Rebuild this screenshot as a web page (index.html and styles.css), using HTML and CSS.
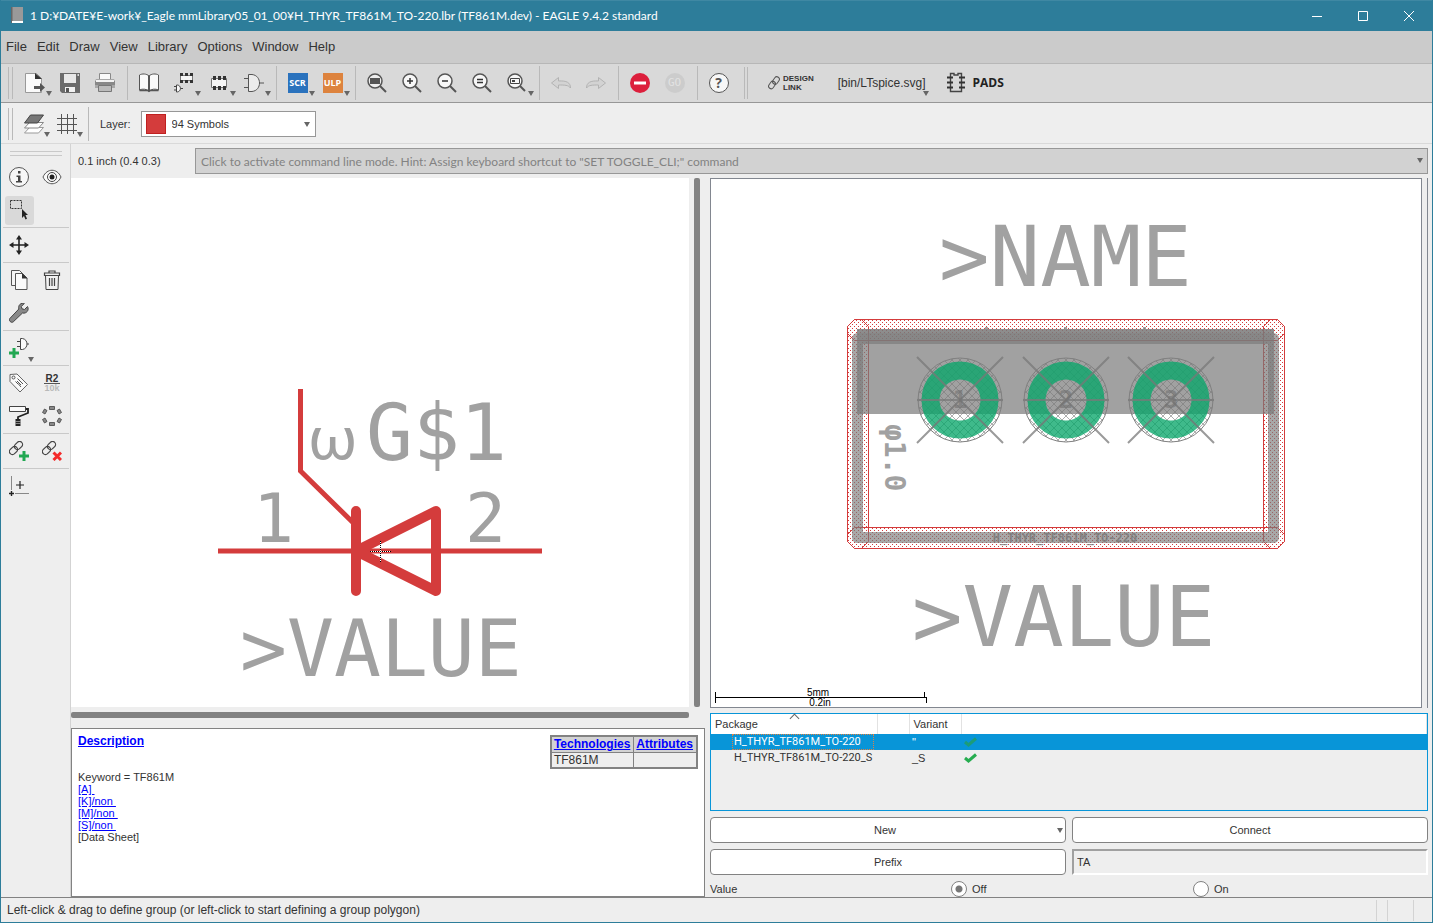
FILE: index.html
```html
<!DOCTYPE html>
<html lang="en">
<head>
<meta charset="utf-8">
<title>EAGLE 9.4.2 standard</title>
<link rel="stylesheet" href="styles.css">
</head>
<body>
<div class="window">
  <header class="titlebar">
    <svg class="app-icon" width="14" height="18" viewBox="0 0 14 18"><rect x="1" y="0" width="12" height="14" fill="#999"/><path d="M1 0h1.500v16H1z" fill="#666"/><path d="M2 14h11v2H2z" fill="#fff"/></svg>
    <h1 class="title">1 D:¥DATE¥E-work¥_Eagle mmLibrary05_01_00¥H_THYR_TF861M_TO-220.lbr (TF861M.dev) - EAGLE 9.4.2 standard</h1>
    <div class="caption-buttons">
      <button class="caption" aria-label="Minimize"><svg width="12" height="12" viewBox="0 0 12 12"><path d="M1 6.500h10" stroke="#fff" fill="none"/></svg></button>
      <button class="caption" aria-label="Maximize"><svg width="12" height="12" viewBox="0 0 12 12"><path d="M1.500 1.500h9v9h-9z" stroke="#fff" fill="none"/></svg></button>
      <button class="caption" aria-label="Close"><svg width="12" height="12" viewBox="0 0 12 12"><path d="M1 1l10 10M11 1L1 11" stroke="#fff" fill="none"/></svg></button>
    </div>
  </header>

  <nav class="menubar">
    <button class="menu">File</button>
    <button class="menu">Edit</button>
    <button class="menu">Draw</button>
    <button class="menu">View</button>
    <button class="menu">Library</button>
    <button class="menu">Options</button>
    <button class="menu">Window</button>
    <button class="menu">Help</button>
  </nav>

  <div class="toolbar">
    <span class="grip"></span>
    <button class="tool drop" aria-label="Open"><svg width="20" height="20" viewBox="0 0 20 20"><path d="M.5.5h11l5 5v14H.5z" fill="#fafafa" stroke="#999"/><path d="M10 0l7 6h-7z" fill="#333"/><path d="M9 13h6v-3l5 4.500-5 4.500v-3H9z" fill="#555"/></svg></button>
    <button class="tool" aria-label="Save"><svg width="20" height="20" viewBox="0 0 20 20"><path d="M0 0h20v20H2l-2-2z" fill="#6b6b6b"/><path d="M4 1h12v9H4z" fill="#e8e8e8"/><path d="M5 14h10v5H5z" fill="#f2f2f2"/><path d="M6 15h3v4H6z" fill="#555"/><path d="M17.500 1h1.500v2h-1.500z" fill="#ddd"/></svg></button>
    <button class="tool" aria-label="Print"><svg width="20" height="20" viewBox="0 0 20 20"><path d="M4.500.5h11v6h-11z" fill="#fafafa" stroke="#888"/><path d="M1 6h18l1 2v7H0V8z" fill="#a8a8a8"/><path d="M0 8h20v4H0z" fill="#888"/><path d="M1 7h18v2H1z" fill="#f3f3f3"/><path d="M3.500 12.500h13v6h-13z" fill="#bbb" stroke="#777"/></svg></button>
    <span class="sep"></span>
    <button class="tool" aria-label="Library"><svg width="20" height="20" viewBox="0 0 20 20"><path d="M10 3C7.500.500 3 .5.5 2v15c3-1.500 7-1 9.500 1 2.500-2 6.500-2.500 9.500-1V2C17 .5 12.500.5 10 3zv15" fill="#fafafa" stroke="#555"/><path d="M10 3v15" stroke="#333" stroke-width="1.400"/><path d="M.5 17.500h8l1.500 1 1.500-1h8" fill="none" stroke="#555" stroke-width="1.400"/></svg></button>
    <button class="tool drop" aria-label="Device"><svg width="20" height="20" viewBox="0 0 20 20"><path d="M6.500 2.500h12v5h-12z" fill="#f5f5f5" stroke="#777"/><path d="M6 0h3v3H6zM11 0h3v3h-3zM16 0h3v3h-3zM6 7h3v3H6zM11 7h3v3h-3zM16 7h3v3h-3z" fill="#333"/><path d="M2.500 12c5-.5 5.500 7 0 7zM0 13.500h2.500M0 17h2.500M6.500 15.500H9" fill="#f7f7f7" stroke="#444"/></svg></button>
    <button class="tool drop" aria-label="Package"><svg width="20" height="20" viewBox="0 0 20 20"><path d="M2.500 5.500h15v9h-15z" fill="#f5f5f5" stroke="#777"/><path d="M4 3h3v4H4zM9 3h3v4H9zM14 3h3v4h-3zM4 13h3v4H4zM9 13h3v4H9zM14 13h3v4h-3z" fill="#333"/></svg></button>
    <button class="tool drop" aria-label="Symbol"><svg width="20" height="20" viewBox="0 0 20 20"><path d="M4.500 1.500H8c10 1 10 16 0 17H4.500zM0 5.500h4.500M0 14.500h4.500M15.500 10H20" fill="#ececec" stroke="#555"/></svg></button>
    <span class="sep"></span>
    <button class="tool drop"><span class="tag scr">SCR</span></button>
    <button class="tool drop"><span class="tag ulp">ULP</span></button>
    <span class="sep"></span>
    <button class="tool" aria-label="Zoom to fit"><svg width="20" height="20" viewBox="0 0 20 20"><circle cx="8" cy="8" r="7" fill="#eee" stroke="#555" stroke-width="1.500"/><path d="M13 13l6 6" stroke="#555" stroke-width="2"/><path d="M3 5h10v6H3z" fill="#555"/></svg></button>
    <button class="tool" aria-label="Zoom in"><svg width="20" height="20" viewBox="0 0 20 20"><circle cx="8" cy="8" r="7" fill="#f7f7f7" stroke="#555" stroke-width="1.500"/><path d="M13 13l6 6" stroke="#555" stroke-width="2"/><path d="M5 8h6M8 5v6" stroke="#333" stroke-width="1.500"/></svg></button>
    <button class="tool" aria-label="Zoom out"><svg width="20" height="20" viewBox="0 0 20 20"><circle cx="8" cy="8" r="7" fill="#f7f7f7" stroke="#555" stroke-width="1.500"/><path d="M13 13l6 6" stroke="#555" stroke-width="2"/><path d="M5 8h6" stroke="#333" stroke-width="1.500"/></svg></button>
    <button class="tool" aria-label="Zoom redraw"><svg width="20" height="20" viewBox="0 0 20 20"><circle cx="8" cy="8" r="7" fill="#f7f7f7" stroke="#555" stroke-width="1.500"/><path d="M13 13l6 6" stroke="#555" stroke-width="2"/><path d="M5 6.500h6M5 9.500h6" stroke="#333" stroke-width="1.300"/></svg></button>
    <button class="tool drop" aria-label="Zoom select"><svg width="20" height="20" viewBox="0 0 20 20"><circle cx="8" cy="8" r="7" fill="#f7f7f7" stroke="#555" stroke-width="1.500"/><path d="M13 13l5 5" stroke="#555" stroke-width="2"/><path d="M3.500 5.500h9v5h-9z" fill="none" stroke="#444"/><path d="M5 7h3v2H5z" fill="#444"/></svg></button>
    <span class="sep"></span>
    <button class="tool" aria-label="Undo"><svg width="20" height="20" viewBox="0 0 20 20"><path d="M.5 10l7-5.500v3.500c8-.5 12 1.500 12 7-2-3-6-3-12-3v3.500z" fill="#d3d3d3" stroke="#b3b3b3"/></svg></button>
    <button class="tool" aria-label="Redo"><svg width="20" height="20" viewBox="0 0 20 20"><path d="M19.500 10l-7-5.500v3.500c-8-.5-12 1.500-12 7 2-3 6-3 12-3v3.500z" fill="#d3d3d3" stroke="#b3b3b3"/></svg></button>
    <span class="sep"></span>
    <button class="tool" aria-label="Stop"><svg width="20" height="20" viewBox="0 0 20 20"><circle cx="10" cy="10" r="10" fill="#dc1f3c"/><path d="M4 8.500h12v3H4z" fill="#fff"/></svg></button>
    <button class="tool"><span class="go">GO</span></button>
    <span class="sep"></span>
    <button class="tool"><span class="help">?</span></button>
    <span class="grip wide"></span>
    <button class="plug design"><svg width="12" height="14" viewBox="0 0 12 14"><g fill="none" stroke="#555"><rect x="-2.500" y="-4" width="5" height="8" rx="2.500" transform="translate(8 4.500) rotate(35)"/><rect x="-2.500" y="-4" width="5" height="8" rx="2.500" transform="translate(4 9) rotate(35)"/></g></svg><span>DESIGN<br>LINK</span></button>
    <button class="plug ltspice drop">[bin/LTspice.svg]</button>
    <button class="plug pads"><svg width="20" height="22" viewBox="0 0 20 22"><path d="M4.500 1.500h3.500v1.500h4V1.500h3.500v18h-11z" fill="#d9d9d9" stroke="#444" stroke-width="1.400"/><path d="M1 5.500h6M1 10.500h6M1 15.500h6M13 5.500h6M13 10.500h6M13 15.500h6" stroke="#333" stroke-width="2"/></svg><span>PADS</span></button>
  </div>

  <div class="toolbar params">
    <span class="grip"></span>
    <button class="tool drop" aria-label="Layer settings"><svg width="20" height="20" viewBox="0 0 20 20"><path d="M.5 19l5-5.500h14l-5 5.500z" fill="#fff" stroke="#999"/><path d="M.5 14l5-5.500h14l-5 5.500z" fill="#fff" stroke="#888"/><path d="M.5 9l6-8h13l-6 8z" fill="#777" stroke="#444"/></svg></button>
    <button class="tool drop" aria-label="Grid"><svg width="20" height="20" viewBox="0 0 20 20"><path d="M0 4.500h20M0 10.500h20M0 16.500h20M4.500 0v20M10.500 0v20M16.500 0v20" stroke="#555"/></svg></button>
    <span class="sep"></span>
    <label class="layer-label" for="layer">Layer:</label>
    <span class="layer-box"><span class="swatch"></span><select id="layer"><option>94 Symbols</option></select></span>
  </div>

  <div class="body">
    <aside class="side">
      <span class="side-grip"></span>
      <div class="group">
        <button class="stool" aria-label="Info"><svg width="20" height="20" viewBox="0 0 20 20"><circle cx="10" cy="10" r="9.500" fill="#f7f7f7" stroke="#555"/><path d="M9 4h2.500v2.500H9zM7.500 8.500h4V14H13v1.500H7V14h2V10H7.500z" fill="#444"/></svg></button>
        <button class="stool" aria-label="Show"><svg width="20" height="20" viewBox="0 0 20 20"><path d="M1 10c4-9 14-9 18 0-4 9-14 9-18 0z" fill="#fafafa" stroke="#555"/><circle cx="10" cy="10" r="4.500" fill="#fff" stroke="#444"/><circle cx="10" cy="10" r="2.500" fill="#222"/></svg></button>
        <button class="stool on" aria-label="Group"><svg width="20" height="20" viewBox="0 0 20 20"><path d="M1.500.5h11v8h-11z" fill="none" stroke="#333" stroke-dasharray="2 1"/><path d="M13 9v9l2-2 1.500 3.500 1.500-.8L16.500 15H19z" fill="#222"/></svg></button>
      </div>
      <div class="group">
        <button class="stool" aria-label="Move"><svg width="20" height="20" viewBox="0 0 20 20"><path d="M10 3v14M3 10h14" stroke="#222" stroke-width="1.600"/><path d="M10 0l3 4.500H7zM10 20l3-4.500H7zM0 10l4.500-3v6zM20 10l-4.500-3v6z" fill="#222"/></svg></button>
      </div>
      <div class="group">
        <button class="stool" aria-label="Copy"><svg width="20" height="20" viewBox="0 0 20 20"><path d="M2.500.5h8l3 3v12h-11z" fill="#f5f5f5" stroke="#555"/><path d="M6.500 3.500h7l4.500 4.500v11.500H6.500z" fill="#fafafa" stroke="#555"/><path d="M13 3l5.500 5.500H13z" fill="#333"/></svg></button>
        <button class="stool" aria-label="Delete"><svg width="20" height="20" viewBox="0 0 20 20"><path d="M3.500 5.500h13l-.5 14H4z" fill="#f2f2f2" stroke="#444"/><path d="M2.500 3h15v2.500h-15zM7 3V1h6v2M7.500 8v8M10 8v8M12.500 8v8" fill="none" stroke="#444" stroke-width="1.200"/></svg></button>
        <button class="stool" aria-label="Change"><svg width="20" height="20" viewBox="0 0 20 20"><path d="M18.500 3.500l-3 3-2.500-.7-.7-2.300 3-3c-3-1.200-6.500 1.500-5.500 5.500L.8 15.500c-1.500 2 1.500 5 3.500 3.300L13.500 10c4 1 7-3 5-6.500z" fill="#888" stroke="#444"/></svg></button>
      </div>
      <div class="group">
        <button class="stool drop" aria-label="Add"><svg width="20" height="20" viewBox="0 0 20 20"><path d="M11.500.5h2c6 1 6 10 0 11h-2zM8 3.500h3.500M8 8.500h3.500M18 6h2" fill="#fafafa" stroke="#444"/><path d="M5 10v10M0 15h10" stroke="#22a852" stroke-width="3"/></svg></button>
      </div>
      <div class="group">
        <button class="stool" aria-label="Name"><svg width="20" height="20" viewBox="0 0 20 20"><path d="M1 1.500l7-.5 10.500 10.500-7.500 7.500L1 8.500z" fill="#fafafa" stroke="#666"/><circle cx="4.500" cy="4.500" r="1.500" fill="none" stroke="#555"/><path d="M8.500 5.500L14 11M6.500 8.500L9 11M8 8l4 4M9 10.500L12 14" stroke="#555"/></svg></button>
        <button class="stool"><span class="r2">R2<span class="tenk">10k</span></span></button>
        <button class="stool" aria-label="Paint"><svg width="20" height="20" viewBox="0 0 20 20"><path d="M.5.500h16v5H.5z" fill="#fafafa" stroke="#444"/><path d="M17 3h2v4l-10 4v3" fill="none" stroke="#222" stroke-width="1.800"/><path d="M6.500 13h5v7h-5z" fill="#222"/><path d="M6.500 15.500h5M6.500 17.500h5" stroke="#ccc" stroke-width=".6"/></svg></button>
        <button class="stool" aria-label="Ring"><svg width="20" height="20" viewBox="0 0 20 20"><g fill="#888" stroke="#444" stroke-width=".8"><path d="M7.500.5h5v3h-5zM7.500 16.500h5v3h-5z"/><path d="M2.500 3l2.500 1.500-2 3.500-2.500-1.500zM17.500 3L15 4.500 17 8l2.500-1.500zM.500 13.500L3 12l2 3.500L2.500 17zM19.500 13.500L17 12l-2 3.500 2.500 1.500z"/></g></svg></button>
      </div>
      <div class="group">
        <button class="stool" aria-label="Connect pins"><svg width="20" height="20" viewBox="0 0 20 20"><g fill="none" stroke="#444" stroke-width="1.200"><rect x="-3" y="-4.500" width="6" height="9" rx="3" transform="translate(9.500 4.500) rotate(45)"/><rect x="-3" y="-4.500" width="6" height="9" rx="3" transform="translate(4.500 9.500) rotate(45)"/></g><path d="M15 10v10M10 15h10" stroke="#22a852" stroke-width="3"/></svg></button>
        <button class="stool" aria-label="Disconnect pins"><svg width="20" height="20" viewBox="0 0 20 20"><g fill="none" stroke="#444" stroke-width="1.200"><rect x="-3" y="-4.500" width="6" height="9" rx="3" transform="translate(9.500 4.500) rotate(45)"/><rect x="-3" y="-4.500" width="6" height="9" rx="3" transform="translate(4.500 9.500) rotate(45)"/></g><path d="M11.500 11.500l7.500 7.500M19 11.500L11.500 19" stroke="#f42a2a" stroke-width="3"/></svg></button>
      </div>
      <div class="group last">
        <button class="stool" aria-label="Origin"><svg width="20" height="20" viewBox="0 0 20 20"><path d="M2.500 0v14M6 17.500h14" stroke="#888"/><path d="M2.500 15v5M0 17.500h5" stroke="#222" stroke-width="1.400"/><path d="M11 5v8M7 9h8" stroke="#222" stroke-width="1.200"/></svg></button>
      </div>
    </aside>

    <main class="main">
      <div class="command-row">
        <span class="coords">0.1 inch (0.4 0.3)</span>
        <span class="command"><input type="text" aria-label="Command line" placeholder="Click to activate command line mode. Hint: Assign keyboard shortcut to &quot;SET TOGGLE_CLI;&quot; command"></span>
      </div>

      <div class="panes">
        <section class="column">
          <div class="symbol-row">
            <svg class="canvas symbol" viewBox="71 178 618 529">
              <g fill="none" stroke="#d43c3c">
                <path d="M300.500 389v82l56 55M218 551h324" stroke-width="5"/>
                <path d="M356 511v80M436 511v80l-80-40z" stroke-width="10" stroke-linecap="round" stroke-linejoin="round"/>
              </g>
              <path d="M370 551.500h21M380.500 541v21" stroke="#fff"/>
              <path d="M370 551.500h21M380.500 541v21" stroke="#000" stroke-dasharray="1 1"/>
              <g class="vec">
                <text class="omega" x="308" y="459">ω</text>
                <text class="v78" x="366" y="460">G$1</text>
                <text class="v68" x="253" y="542">1</text>
                <text class="v68" x="465" y="542">2</text>
                <text class="v78" x="240" y="676">&gt;VALUE</text>
              </g>
            </svg>
            <span class="vbar"></span>
          </div>
          <span class="hbar"></span>
          <div class="description">
            <div class="desc-text">
              <a class="head" href="#description">Description</a>
              <p>Keyword = TF861M<br><a href="#a">[A]&nbsp;</a><br><a href="#k">[K]/non&nbsp;</a><br><a href="#m">[M]/non&nbsp;</a><br><a href="#s">[S]/non&nbsp;</a><br>[Data Sheet]</p>
            </div>
            <table class="tech">
              <tr><th><a href="#tech">Technologies</a></th><th><a href="#attr">Attributes</a></th></tr>
              <tr><td>TF861M</td><td></td></tr>
            </table>
          </div>
        </section>

        <section class="column">
          <div class="package-row">
            <svg class="canvas package" viewBox="711 179 710 528">
              <defs>
                <pattern id="dots" width="4" height="4" patternUnits="userSpaceOnUse"><path d="M0 0h1v1H0zM2 2h1v1H2z" fill="#d43c3c"/></pattern>
                <pattern id="cross" width="8" height="8" patternUnits="userSpaceOnUse"><path d="M0 0l8 8M8 0L0 8" stroke="#797979" stroke-width="1" opacity=".6"/></pattern>
                <g id="pad">
                  <circle r="42" fill="url(#cross)"/>
                  <circle r="29.500" fill="none" stroke="#09a76a" stroke-width="18" opacity=".78"/>
                  <circle r="42" fill="none" stroke="#808080"/>
                  <path d="M-43 -43L43 43M43 -43L-43 43M-43 0h86" stroke="#797979" stroke-width="2" opacity=".75"/>
                </g>
              </defs>
              <g fill="url(#dots)" stroke="#d43c3c">
                <path d="M854.500 319.500h423l7 7v7l-7 7h-423l-7-7v-7z"/>
                <path d="M854.500 527.500h423l7 7v7l-7 7h-423l-7-7v-7z"/>
                <path d="M854.500 319.500h7l7 7v215l-7 7h-7l-7-7v-215z"/>
                <path d="M1270.500 319.500h7l7 7v215l-7 7h-7l-7-7v-215z"/>
              </g>
              <g fill="#797979" opacity=".7"><path d="M857 329h417v85H857zM985 327h3v2h-3zM1064 327h3v2h-3zM1143 327h3v2h-3z"/></g>
              <rect x="857.500" y="338.500" width="416" height="199" fill="none" stroke="#797979" stroke-width="11" stroke-linejoin="round" opacity=".65"/>
              <path d="M857 329h417v4H857z" fill="#797979" opacity=".5"/>
              <use href="#pad" x="960" y="400"/>
              <use href="#pad" x="1066" y="400"/>
              <use href="#pad" x="1171" y="400"/>
              <g class="padno"><text x="960" y="408">1</text><text x="1066" y="408">2</text><text x="1171" y="408">3</text></g>
              <g class="vec">
                <text class="v84" x="939" y="286">&gt;NAME</text>
                <text class="v84" x="912" y="646">&gt;VALUE</text>
                <text class="phi" transform="translate(885 424) rotate(90)">φ1.0</text>
              </g>
              <text class="pkgname" x="1065" y="542">H_THYR_TF861M_TO-220</text>
              <path d="M715.500 692v11M715 697.500h212M924.500 692v6M926.500 697v6" stroke="#000" fill="none"/>
              <g class="scale"><text x="818" y="696">5mm</text><text x="820" y="706">0.2in</text></g>
            </svg>
          </div>

          <div class="packages">
            <table>
              <colgroup><col class="c-name"><col class="c-gap"><col class="c-var"><col></colgroup>
              <thead><tr><th class="sorted">Package</th><th></th><th>Variant</th><th></th></tr></thead>
              <tbody>
                <tr class="selected"><td class="name"><span>H_THYR_TF861M_TO-220</span></td><td></td><td>"</td><td><svg width="13" height="10" viewBox="0 0 13 10"><path d="M1 5l3.500 3L12 1.500" fill="none" stroke="#1c9c78" stroke-width="3"/></svg></td></tr>
                <tr><td class="name"><span>H_THYR_TF861M_TO-220_S</span></td><td></td><td>_S</td><td><svg width="13" height="10" viewBox="0 0 13 10"><path d="M1 5l3.500 3L12 1.500" fill="none" stroke="#26ad50" stroke-width="3"/></svg></td></tr>
              </tbody>
            </table>
          </div>

          <div class="actions">
            <button class="action new">New</button>
            <button class="action">Connect</button>
            <button class="action">Prefix</button>
            <input class="prefix" type="text" value="TA" aria-label="Prefix value" readonly>
          </div>
          <div class="value-row">
            <span>Value</span>
            <label><input type="radio" name="value" checked>Off</label>
            <label><input type="radio" name="value">On</label>
          </div>
        </section>
      </div>
    </main>
  </div>

  <footer class="status"><span class="message">Left-click &amp; drag to define group (or left-click to start defining a group polygon)</span><span class="cell a"></span><span class="cell b"></span><span class="cell c"></span></footer>
</div>
</body>
</html>
```
FILE: styles.css
```css
* { box-sizing: border-box; }
body { margin: 0; font: 11px/16px "Liberation Sans", Arial, sans-serif; color: #333; }
button, input, select { font: inherit; color: inherit; }
button { border: 0; background: none; padding: 0; }
svg { display: block; }
a { color: #00f; }

.window { display: flex; flex-direction: column; height: 100vh; background: #eee; border: 1px solid #2d7d9a; border-top: 0; }

.titlebar { display: flex; align-items: center; flex: none; height: 31px; padding-left: 9px; background: #2d7d9a; border-top: 1px solid #3f88a3; color: #fff; }
.title { flex: 1; margin: 0 0 0 6px; font: 12px/16px Lato, "Open Sans", sans-serif; white-space: nowrap; overflow: hidden; }
.caption-buttons { display: flex; }
.caption { display: grid; place-items: center; width: 46px; height: 30px; }

.menubar { display: flex; flex: none; gap: 10px; height: 33px; padding-left: 5px; background: #cbcbcb; border-bottom: 1px solid #b7b7b7; }
.menu { font-size: 13px; }

.toolbar { display: flex; align-items: center; flex: none; height: 39px; padding-left: 7px; background: #d9d9d9; border-bottom: 1px solid #979797; }
.toolbar.params { height: 41px; padding-top: 1px; background: #eee; border-bottom-color: #d9d9d9; }
.grip { width: 5px; height: 32px; margin-right: 5px; border: solid #b9b9b9; border-width: 0 1px; }
.grip.wide { width: 4px; margin: 0 20px 0 7px; }
.sep { width: 1px; height: 34px; margin: 0 4px; background: #b9b9b9; }
.tool { position: relative; display: grid; place-items: center; width: 35px; height: 34px; padding-right: 2px; }
.params .tool { width: 33px; }
.drop::after { content: ""; position: absolute; right: 1px; bottom: 4px; border: solid transparent; border-width: 5px 3px 0; border-top-color: #666; }
.tag { width: 20px; font: bold 9px/20px "Open Sans", sans-serif; color: #fff; text-align: center; }
.scr { background: #2a72bd; }
.ulp { background: #dd833e; }
.go { width: 20px; border-radius: 50%; background: #ccc; color: #e2e2e2; font: 11px/20px "DejaVu Sans Mono", monospace; }
.help { width: 20px; border: 1px solid #555; border-radius: 50%; background: #f7f7f7; color: #555; font: bold 14px/18px "Open Sans", sans-serif; }
.plug { position: relative; display: flex; align-items: center; height: 34px; }
.design { gap: 3px; font: bold 8px/9px "Liberation Sans", sans-serif; text-align: left; }
.ltspice { margin-left: 24px; padding-right: 3px; font-size: 12px; }
.ltspice::after { right: 0; }
.pads { gap: 7px; margin-left: 17px; font: bold 12px/16px "Open Sans", sans-serif; color: #222; }
.layer-label { margin: 0 10px 0 7px; }
.layer-box { display: flex; align-items: center; position: relative; width: 175px; height: 26px; padding: 0 4px; background: #fff; border: 1px solid #979797; }
.layer-box::after, .command::after, .new::after { content: ""; position: absolute; right: 5px; top: 10px; border: solid transparent; border-width: 5px 3px 0; border-top-color: #666; }
.swatch { width: 20px; height: 20px; background: #d43c3c; border: 1px solid #c02020; }
select { flex: 1; appearance: none; border: 0; background: none; padding: 0 0 0 6px; outline: 0; }

.body { display: flex; flex: 1; min-height: 0; }
.side { flex: none; width: 70px; padding: 7px 1px 0 2px; border-right: 1px solid #d3d3d3; }
.side-grip { display: block; height: 5px; margin: 0 7px 5px; border: solid #c9c9c9; border-width: 1px 0; }
.group { display: grid; grid-template-columns: 29px 29px; gap: 4px; padding: 2px; margin-bottom: 1px; border-bottom: 1px solid #c9c9c9; }
.group.last { border: 0; }
.stool { position: relative; display: grid; place-items: center; width: 29px; height: 29px; padding: 0 1px 1px 0; border-radius: 3px; }
.stool.on { background: #d9d9d9; }
.stool.drop::after { right: 0; bottom: 1px; }
.r2 { display: grid; font: bold 10px/9px "Liberation Sans", sans-serif; color: #333; }
.tenk { border-top: 1px solid #555; color: #b9b9b9; font-size: 9px; }

.main { display: flex; flex-direction: column; flex: 1; min-width: 0; padding: 4px 4px 0 0; }
.command-row { display: flex; align-items: center; flex: none; height: 26px; margin-bottom: 4px; }
.coords { width: 124px; padding-left: 7px; }
.command { position: relative; flex: 1; }
.command input { display: block; width: 100%; height: 26px; padding: 0 5px; background: #d2d2d2; border: 1px solid #979797; font: 12px/16px Lato, sans-serif; }
.command input::placeholder { color: #828282; opacity: 1; }

.panes { display: grid; grid-template-columns: 634fr 718fr; gap: 5px; flex: 1; min-height: 0; }
.column { display: flex; flex-direction: column; min-width: 0; min-height: 0; }
.canvas { flex: 1; min-width: 0; height: 100%; background: #fff; }
.symbol-row { display: flex; flex: 1; min-height: 0; padding-right: 5px; gap: 5px; }
.vbar { width: 6px; background: #828282; border-radius: 2px; }
.hbar { flex: none; height: 6px; margin: 5px 16px 10px 0; background: #828282; border-radius: 2px; }
.description { display: flex; justify-content: space-between; align-items: flex-start; flex: none; height: 169px; padding: 6px; background: #fff; border: 1px solid #828282; line-height: 12px; }
.desc-text p { margin: 24px 0 0; }
.head { display: block; font-size: 12px; font-weight: bold; }
.tech { border-collapse: collapse; border: 2px solid #828282; background: #eee; font-size: 12px; }
.tech th, .tech td { height: 16px; padding: 0 3px 0 2px; border: 1px solid #828282; text-align: left; }
.tech th { background: #d3d3d3; }

.package-row { display: flex; flex: 1; min-height: 0; padding-right: 5px; border-right: 1px solid #828790; }
.package { border: 1px solid #828790; }
.packages { flex: none; height: 98px; margin: 5px 0 6px; border: 1px solid #0895d8; }
.packages table { width: 100%; table-layout: fixed; border-collapse: collapse; }
.c-name { width: 166px; }
.c-gap { width: 32px; }
.c-var { width: 52px; }
.packages th { position: relative; height: 20px; padding: 0 4px; background: #fff; border-right: 1px solid #e2e2e2; font-weight: normal; text-align: left; }
.sorted::after { content: ""; position: absolute; left: 80px; top: 1px; width: 6px; height: 6px; border: solid #666; border-width: 1px 0 0 1px; transform: rotate(45deg); }
.packages td { height: 16px; padding: 0 3px; line-height: 14px; }
.packages .name { padding-left: 21px; font-family: Roboto, sans-serif; white-space: nowrap; }
.name span { display: block; border: 1px solid transparent; padding-left: 1px; }
.selected { background: #0895d8; color: #fff; }
.selected .name span { border: 1px dotted #e08040; }
.actions { display: grid; grid-template-columns: 1fr 1fr; gap: 6px; flex: none; }
.action { position: relative; height: 26px; background: #fff; border: 1px solid #828282; border-radius: 4px; }
.new { padding-right: 6px; }
.new::after { right: 2px; }
.prefix { min-width: 0; height: 26px; padding: 0 3px; background: #eee; border: 2px solid; border-color: #a0a0a0 #fff #fff #a0a0a0; }
.value-row { display: grid; grid-template-columns: 241fr 242fr 235fr; flex: none; margin-top: 6px; }
.value-row label { display: flex; align-items: center; gap: 5px; }
.value-row input { appearance: none; width: 16px; height: 16px; margin: 0; background: #fff; border: 1px solid #828282; border-radius: 50%; }
.value-row input:checked { background: radial-gradient(#777 0 3px, #fff 4px); }

.status { display: flex; align-items: center; flex: none; height: 25px; padding-left: 6px; border-top: 1px solid #828282; font-size: 12px; }
.message { flex: 1; }
.cell { height: 21px; border-left: 1px solid #d3d3d3; }
.cell.a { width: 11px; }
.cell.b { width: 26px; }
.cell.c { width: 19px; }

.vec { fill: #a1a1a1; font-family: "DejaVu Sans Mono", monospace; }
.omega { font: 60px Roboto, sans-serif; }
.v68 { font-size: 68px; }
.v78 { font-size: 78px; }
.v84 { font-size: 84px; }
.phi { font-size: 28px; font-weight: bold; }
.padno { font: bold 24px "DejaVu Sans Mono", monospace; fill: #707070; opacity: .6; text-anchor: middle; }
.pkgname { font: bold 12px "DejaVu Sans Mono", monospace; fill: #797979; opacity: .8; text-anchor: middle; }
.scale { font-size: 10px; fill: #000; text-anchor: middle; }
```
